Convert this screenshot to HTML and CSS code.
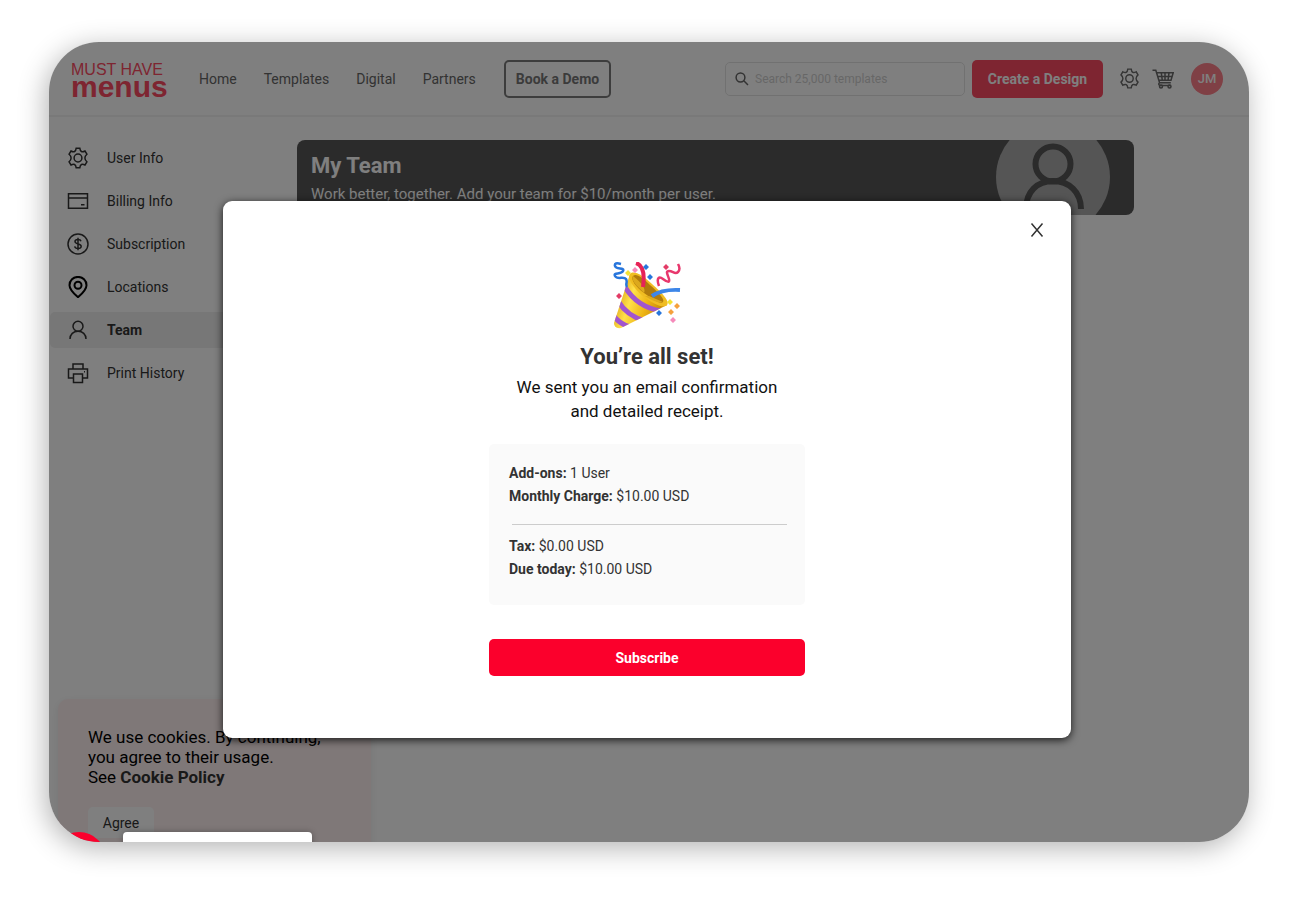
FILE: index.html
```html
<!DOCTYPE html>
<html lang="en">
<head>
<meta charset="utf-8">
<title>My Team – Must Have Menus</title>
<link rel="stylesheet" href="styles.css">
</head>
<body>
<svg class="defs" aria-hidden="true">
  <symbol id="gear" viewBox="0 0 22 22">
    <path d="M9.200 1.200h3.600q.3 2.600 1.600 3.300t3.600-.5l1.900 3.200q-2 1.800-2 3.800t2 3.800L18 18q-2.300-1.200-3.600-.5t-1.600 3.300H9.200q-.3-2.600-1.600-3.300T4 18l-1.900-3.200q2-1.800 2-3.800t-2-3.800L4 4q2.300 1.200 3.600.5t1.600-3.300z"/>
    <circle cx="11" cy="11" r="3.900"/>
  </symbol>
</svg>
<div class="frame">
  <header class="topbar">
    <a class="logo" href="#"><span class="logo-top">MUST HAVE</span><span class="logo-bottom">menus</span></a>
    <nav class="main-nav" aria-label="Main">
      <a href="#">Home</a><a href="#">Templates</a><a href="#">Digital</a><a href="#">Partners</a>
    </nav>
    <button class="demo" type="button">Book a Demo</button>
    <div class="tools">
      <label class="search">
        <svg width="14" height="14" viewBox="0 0 14 14"><circle cx="5.500" cy="5.500" r="4.400"/><path d="M8.800 8.800 13 13"/></svg>
        <input type="search" placeholder="Search 25,000 templates" aria-label="Search templates">
      </label>
      <button class="create" type="button">Create a Design</button>
      <a class="tool-icon" href="#" aria-label="Settings"><svg width="21" height="21"><use href="#gear"/></svg></a>
      <a class="tool-icon" href="#" aria-label="Cart"><svg width="22" height="20" viewBox="0 0 22 20"><path d="M.5 1.200h3.300l3.800 12.600h11.200M4.500 3.800h16.700l-2.200 7.500H6.700M5.500 7.500h14.600M9.300 3.800l1 7.500M13 3.800v7.500M17 3.800l-1 7.500M7.600 13.800c-1.400.8-1 2.600.6 2.600h10.600"/><circle cx="9" cy="17.500" r="1.500"/><circle cx="17.500" cy="17.500" r="1.500"/></svg></a>
      <button class="avatar" type="button">JM</button>
    </div>
  </header>
  <div class="content">
    <nav class="side-nav" aria-label="Account">
      <a href="#"><svg width="22" height="22"><use href="#gear"/></svg>User Info</a>
      <a href="#"><svg width="22" height="22" viewBox="0 0 22 22"><path d="M1.500 3.800h19v14.500h-19zM1.500 8h19M14 14.700h3.500"/></svg>Billing Info</a>
      <a href="#"><svg width="22" height="22" viewBox="0 0 22 22"><circle cx="11" cy="11" r="10"/><path d="M14 8.300c-.3-1.200-1.400-1.800-3-1.800-1.700 0-3 .8-3 2.100 0 3.200 6.200 1.400 6.200 4.600 0 1.400-1.300 2.300-3.200 2.300-1.800 0-3-.8-3.300-2.100M11 4.800v12.400"/></svg>Subscription</a>
      <a href="#"><svg class="pin" width="22" height="22" viewBox="0 0 22 22"><path d="M11 21.200C7.500 18 2.500 14 2.500 9.200a8.500 8.300 0 0 1 17 0c0 4.800-5 8.800-8.500 12z"/><circle cx="11" cy="9.300" r="3.500"/></svg>Locations</a>
      <a class="active" href="#" aria-current="page"><svg width="22" height="22" viewBox="0 0 22 22"><circle cx="11" cy="7.200" r="5"/><path d="M3 20c0-4.700 3.400-7.800 8-7.800s8 3.100 8 7.800"/></svg>Team</a>
      <a href="#"><svg width="22" height="22" viewBox="0 0 22 22"><path d="M6 7V2h10v5M6 16H1.500V7h19v9H16M6.500 12h9v8.500h-9zM17 9.700h1"/></svg>Print History</a>
    </nav>
    <main class="main">
      <section class="banner">
        <div>
          <h1>My Team</h1>
          <p>Work better, together. Add your team for $10/month per user.</p>
        </div>
        <svg class="banner-art" width="114" height="114" viewBox="0 0 114 114"><circle class="disc" cx="57" cy="57" r="57"/><circle cx="57" cy="44" r="17.500"/><path d="M30 89c0-17 11-28 27-28s28 11 28 28"/></svg>
      </section>
    </main>
  </div>
  <aside class="cookies">
    <p>We use cookies. By continuing,<br>you agree to their usage.<br>See <a href="#">Cookie Policy</a></p>
    <button type="button">Agree</button>
  </aside>
  <div class="backdrop">
    <section class="modal" role="dialog" aria-modal="true" aria-labelledby="modal-title">
      <button class="close" type="button" aria-label="Close"><svg width="14" height="14" viewBox="0 0 14 14"><path d="M1.500 .5 12.500 13.500M12.500 .5 1.500 13.500"/></svg></button>
      <svg class="party" width="68" height="68" viewBox="0 0 68 68" aria-hidden="true">
        <defs>
          <linearGradient id="gold" x1="0" y1=".4" x2="1" y2=".75"><stop offset="0" stop-color="#d89a10"/><stop offset=".3" stop-color="#ffe14a"/><stop offset=".6" stop-color="#edb313"/><stop offset="1" stop-color="#b87808"/></linearGradient>
          <clipPath id="cone"><path d="M17 12 1 61q0 6 7 5l46-23z"/></clipPath>
        </defs>
        <path d="M17 12 1 61q0 6 7 5l46-23z" fill="url(#gold)"/>
        <g clip-path="url(#cone)" fill="none" stroke="#a155cf" stroke-width="5"><path d="M12 25q12 20 36 24M5 39q9 15 27 20M0 53q6 9 17 12"/></g>
        <path d="M17 12c4-4 12 1 22 10s18 17 15 21-14-1-24-9-16-18-13-22z" fill="#f0bd22"/>
        <path d="M20 14c3-3 9 1 17 9 8 7 15 14 13 17s-11-3-19-9-14-14-11-17z" fill="#b07b0c"/>
        <path d="M20 14q14 11 11 17l-8-8q-5-6-3-9zM36 34l14 6q-6 2-18-6z" fill="#dca91d"/>
        <path d="M23 1q10 3 7 24" fill="none" stroke="#e72458" stroke-width="4"/>
        <path d="M39 34q10-7 28-6" fill="none" stroke="#3d86e8" stroke-width="4"/>
        <path d="M8 2Q1 0 2 4c1 4 10 1 8 5s-10 1-8 5 9 0 11 3-1 5 1 8" fill="none" stroke="#2876dc" stroke-width="2.500"/>
        <path d="M46 24c-3-8 0-10 4-7s7 4 6 0-4-8 0-8 6 4 9 1 1-6 0-8" fill="none" stroke="#e8386d" stroke-width="2.500"/>
        <g fill="#2876dc"><path d="m33 2 3 3-3 3-3-3zM37 12l3 3-3 3-3-3zM46 48l3 3-3 3-3-3z"/></g>
        <g fill="#e33b66"><path d="m53 2 3 3-3 3-3-3zM6 31l3 3-3 3-3-3z"/></g>
        <g fill="#f58bbb"><path d="m22 5 3 3-3 3-3-3zM60 55l3 3-3 3-3-3z"/></g>
        <g fill="#f4e335"><path d="m15 8 3 3-3 3-3-3zM57 37l3 3-3 3-3-3z"/></g>
        <g fill="#f5a13d"><path d="m64 41 3 3-3 3-3-3zM58 47l3 3-3 3-3-3z"/></g>
      </svg>
      <h2 id="modal-title">You’re all set!</h2>
      <p class="message">We sent you an email confirmation<br>and detailed receipt.</p>
      <div class="receipt">
        <p><b>Add-ons:</b> 1 User</p>
        <p><b>Monthly Charge:</b> $10.00 USD</p>
        <hr>
        <p><b>Tax:</b> $0.00 USD</p>
        <p><b>Due today:</b> $10.00 USD</p>
      </div>
      <button class="subscribe" type="button">Subscribe</button>
    </section>
  </div>
  <div class="chat-dot"></div>
  <div class="chat-card"></div>
</div>
</body>
</html>
```
FILE: styles.css
```css
* { box-sizing: border-box; }

body {
  margin: 0;
  min-height: 100vh;
  padding: 42px 51px 58px 49px;
  display: flex;
  background: #fff;
  color: #333;
  font-family: Roboto, "Liberation Sans", sans-serif;
  font-size: 14px;
}

h1, h2, p { margin: 0; }
a { color: inherit; text-decoration: none; }
button, input { font: inherit; color: inherit; border: 0; padding: 0; background: none; }
svg { flex: none; fill: none; stroke: currentColor; stroke-width: 1.5; }
.defs { position: absolute; width: 0; height: 0; }

.frame {
  position: relative;
  flex: 1;
  overflow: hidden;
  border-radius: 50px;
  background: #fff;
  box-shadow: -3px 6px 28px rgba(0, 0, 0, .3);
}

.topbar {
  display: flex;
  align-items: center;
  height: 75px;
  padding: 0 26px 0 22px;
  border-bottom: 2px solid #f2f2f2;
}
.logo {
  display: flex;
  flex-direction: column;
  width: 95px;
  color: #fc4a62;
  font-family: "Liberation Sans", sans-serif;
  white-space: nowrap;
}
.logo-top { font-size: 16px; line-height: 16px; }
.logo-bottom { font-size: 30px; font-weight: 700; line-height: 17px; }
.main-nav { display: flex; gap: 27px; margin-left: 33px; color: #666; }
.demo {
  height: 38px;
  margin-left: 28px;
  padding: 0 10px;
  border: 2px solid #7a7a7a;
  border-radius: 5px;
  color: #777;
  font-weight: 700;
  white-space: nowrap;
}
.tools { display: flex; align-items: center; margin-left: auto; }
.search {
  display: flex;
  align-items: center;
  gap: 6px;
  width: 240px;
  height: 34px;
  padding: 0 9px;
  border: 1px solid #e2e2e2;
  border-radius: 5px;
  color: #666;
}
.search input { flex: 1; min-width: 0; font-size: 12px; outline: 0; }
.search input::placeholder { color: #cfcfcf; opacity: 1; }
.create {
  width: 131px;
  height: 38px;
  margin: 0 16px 0 7px;
  border-radius: 5px;
  background: #fc4a62;
  color: #fff;
  font-weight: 700;
}
.tool-icon { display: flex; margin-right: 12px; color: #6a6a6a; }
.avatar {
  width: 32px;
  height: 32px;
  margin-left: 5px;
  border-radius: 50%;
  background: #ff808a;
  color: #fff;
  font-size: 13px;
  font-weight: 500;
}

.content { display: flex; padding: 23px 115px 0 1px; }
.side-nav { display: flex; flex-direction: column; gap: 7px; width: 247px; }
.side-nav a {
  display: flex;
  align-items: center;
  gap: 18px;
  height: 36px;
  padding-left: 17px;
  border-radius: 5px;
}
.side-nav .active { background: #eee; font-weight: 700; }
.side-nav .pin { color: #000; stroke-width: 2; }
.main { flex: 1; }
.banner {
  display: flex;
  justify-content: space-between;
  height: 75px;
  padding: 0 24px 0 14px;
  overflow: hidden;
  border-radius: 8px;
  background: #565656;
  color: #fff;
}
.banner h1 { margin-top: 12px; font-size: 22px; line-height: 28px; }
.banner p { margin-top: 3px; font-size: 15px; line-height: 22px; }
.banner-art { margin-top: -20px; color: #565656; stroke-width: 6; }
.disc { fill: #aaa; stroke: none; }

.cookies {
  position: absolute;
  left: 9px;
  bottom: -12px;
  width: 313px;
  padding: 28px 30px 16px;
  border-radius: 10px 10px 0 0;
  background: #fff0f1;
  box-shadow: 0 2px 8px rgba(0, 0, 0, .08);
  color: #000;
  font-size: 17px;
  line-height: 20px;
  white-space: nowrap;
}
.cookies a { color: #333; font-weight: 700; }
.cookies button {
  width: 66px;
  height: 31px;
  margin-top: 20px;
  border-radius: 5px;
  background: #fff;
  color: #333;
  font-size: 14px;
}

.backdrop {
  position: absolute;
  inset: 0;
  display: flex;
  justify-content: center;
  align-items: flex-start;
  padding: 159px 4px 0 0;
  background: rgba(0, 0, 0, .5);
}
.modal {
  position: relative;
  display: flex;
  flex-direction: column;
  align-items: center;
  width: 848px;
  padding: 61px 20px 62px;
  border-radius: 9px;
  background: #fff;
  box-shadow: 0 2px 8px rgba(0, 0, 0, .8);
}
.close {
  position: absolute;
  top: 18px;
  right: 23px;
  display: grid;
  place-items: center;
  width: 22px;
  height: 22px;
}
.party { stroke: none; }
.modal h2 { margin-top: 13px; font-size: 22px; line-height: 28px; }
.message { margin-top: 4px; color: #111; font-size: 17px; line-height: 24px; text-align: center; }
.receipt {
  width: 316px;
  margin-top: 21px;
  padding: 18px 18px 24px 20px;
  border-radius: 5px;
  background: #fafafa;
  line-height: 23px;
}
.receipt hr {
  margin: 16px 0 10px 3px;
  border: 0;
  border-top: 1px solid #ccc;
}
.subscribe {
  width: 316px;
  height: 37px;
  margin-top: 34px;
  border-radius: 5px;
  background: #fb002c;
  color: #fff;
  font-weight: 700;
}

.chat-dot, .chat-card { position: absolute; }
.chat-dot {
  left: 3px;
  bottom: -44px;
  width: 54px;
  height: 54px;
  border-radius: 50%;
  background: #fb002c;
}
.chat-card {
  left: 74px;
  bottom: -50px;
  width: 189px;
  height: 60px;
  border-radius: 4px;
  background: #fff;
  box-shadow: 0 0 6px rgba(0, 0, 0, .3);
}
```
